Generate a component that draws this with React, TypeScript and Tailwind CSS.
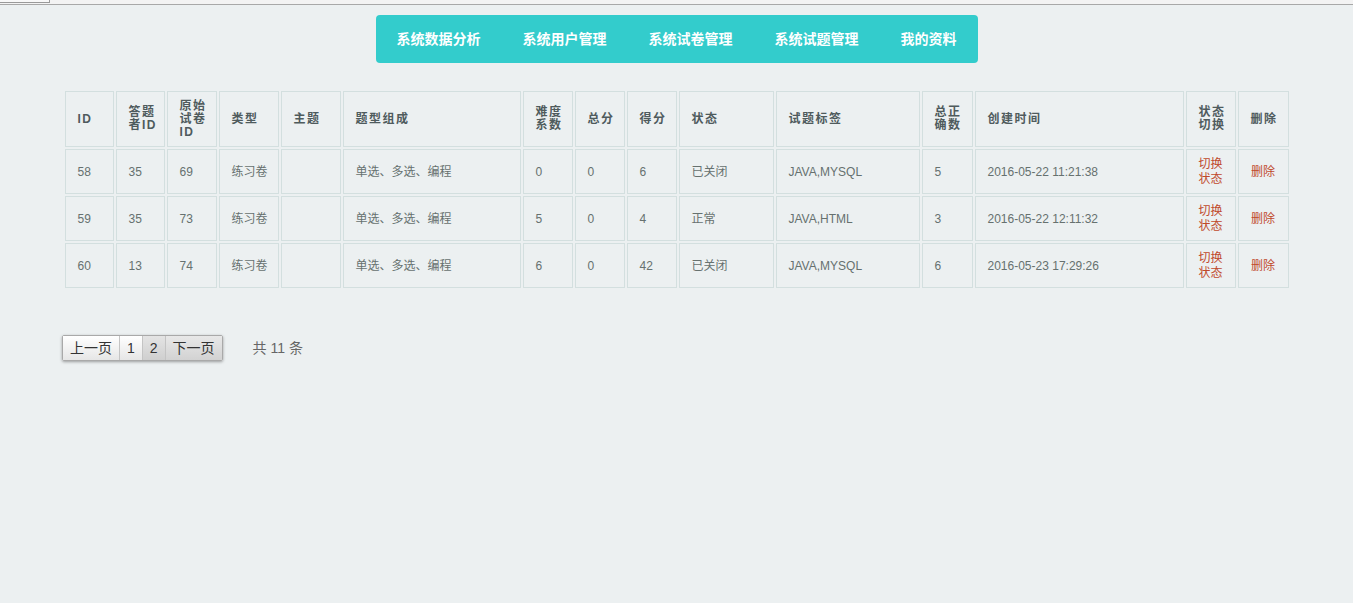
import React from 'react'

const navItems = ['系统数据分析', '系统用户管理', '系统试卷管理', '系统试题管理', '我的资料']

interface Col {
  label: React.ReactNode
  w: string
}

const cols: Col[] = [
  { label: 'ID', w: 'w-[49px]' },
  { label: <>答题<br />者ID</>, w: 'w-[49px]' },
  { label: <>原始<br />试卷<br />ID</>, w: 'w-[50px]' },
  { label: '类型', w: 'w-[60px]' },
  { label: '主题', w: 'w-[60px]' },
  { label: '题型组成', w: 'w-[178px]' },
  { label: <>难度<br />系数</>, w: 'w-[50px]' },
  { label: '总分', w: 'w-[50px]' },
  { label: '得分', w: 'w-[50px]' },
  { label: '状态', w: 'w-[95px]' },
  { label: '试题标签', w: 'w-[144px]' },
  { label: <>总正<br />确数</>, w: 'w-[51px]' },
  { label: '创建时间', w: 'w-[209px]' },
  { label: <>状态<br />切换</>, w: 'w-[50px]' },
  { label: '删除', w: 'w-[51px]' },
]

const rows = [
  ['58', '35', '69', '练习卷', '', '单选、多选、编程', '0', '0', '6', '已关闭', 'JAVA,MYSQL', '5', '2016-05-22 11:21:38'],
  ['59', '35', '73', '练习卷', '', '单选、多选、编程', '5', '0', '4', '正常', 'JAVA,HTML', '3', '2016-05-22 12:11:32'],
  ['60', '13', '74', '练习卷', '', '单选、多选、编程', '6', '0', '42', '已关闭', 'JAVA,MYSQL', '6', '2016-05-23 17:29:26'],
]

const font = 'font-["Liberation_Sans","Noto_Sans_CJK_SC",sans-serif]'

export default function App() {
  return (
    <div className={`min-h-[603px] bg-[#ecf0f1] ${font}`}>
      {/* 顶部残留条 */}
      <div className="relative h-[5px] border-b border-[#a8a8a8] bg-[#f3f3f3]">
        <div className="absolute left-0 top-0 h-[3px] w-[50px] border-b border-r border-[#9a9a9a] bg-[#f8f8f8]" />
      </div>

      <div className="flex justify-center pt-[10px]">
        <nav className="flex h-[48px] items-center rounded-[4px] bg-[#33cccc]">
          {navItems.map((item) => (
            <a key={item} className="px-[21px] text-[14px] font-bold text-white">
              {item}
            </a>
          ))}
        </nav>
      </div>

      <table className="mx-auto mt-[26px] w-[1228px] table-fixed border-separate border-spacing-[2px]">
        <thead>
          <tr>
            {cols.map((c, i) => (
              <th
                key={i}
                className={`${c.w} h-[56px] border border-[#d3dfdf] pl-3 pr-1 text-left align-middle text-[12px] leading-[13px] font-bold tracking-[1.5px] text-[#4f5b5d] ${i >= 13 ? 'text-center pl-1' : ''}`}
              >
                {c.label}
              </th>
            ))}
          </tr>
        </thead>
        <tbody>
          {rows.map((r) => (
            <tr key={r[0]}>
              {r.map((v, i) => (
                <td
                  key={i}
                  className="h-[45px] border border-[#d3dfdf] pl-3 align-middle text-[12px] text-[#66716f]"
                >
                  {v}
                </td>
              ))}
              <td className="h-[45px] border border-[#d3dfdf] text-center align-middle text-[12px] leading-[15px] text-[#c0492b]">
                切换<br />状态
              </td>
              <td className="h-[45px] border border-[#d3dfdf] text-center align-middle text-[12px] text-[#c0492b]">
                删除
              </td>
            </tr>
          ))}
        </tbody>
      </table>

      <div className="mt-[45px] flex items-center pl-[62px]">
        <div className="flex h-[26px] rounded-[2px] border border-[#a9a9a9] text-[14px] text-[#333] shadow-[0_1px_3px_rgba(0,0,0,0.35)]">
          <span className="flex items-center bg-gradient-to-b from-white to-[#e6e6e6] px-[7px]">上一页</span>
          <span className="flex items-center border-l border-[#c4c4c4] bg-gradient-to-b from-white to-[#e6e6e6] px-[7px]">1</span>
          <span className="flex items-center border-l border-[#c4c4c4] bg-gradient-to-b from-[#e4e4e4] to-[#cfcfcf] px-[7px]">2</span>
          <span className="flex items-center border-l border-[#c4c4c4] bg-gradient-to-b from-[#e8e8e8] to-[#d2d2d2] px-[7px]">下一页</span>
        </div>
        <span className="ml-[30px] text-[14px] text-[#666]">共 11 条</span>
      </div>
    </div>
  )
}
